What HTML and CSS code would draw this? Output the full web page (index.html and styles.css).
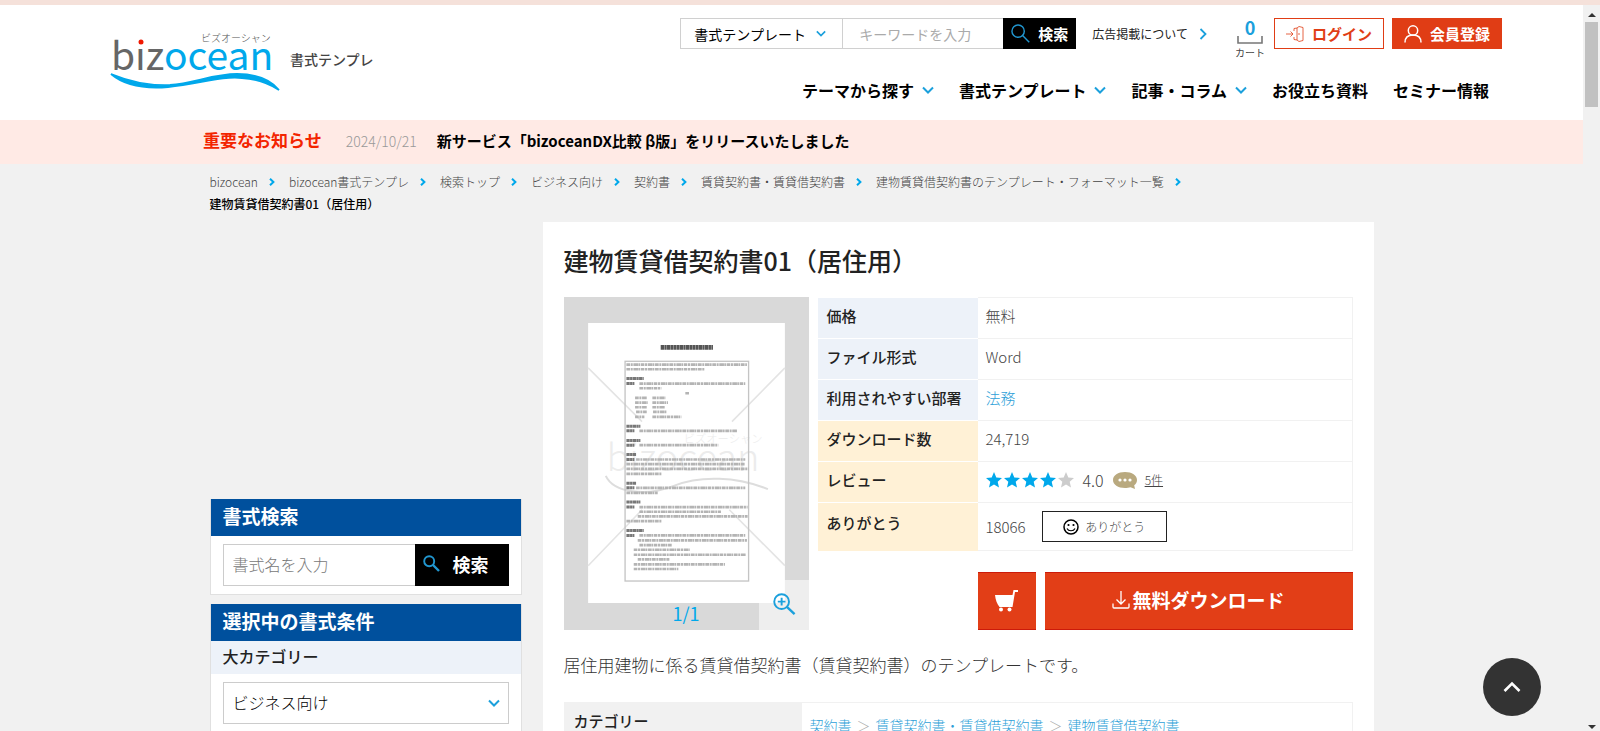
FILE: index.html
```html
<!DOCTYPE html>
<html lang="ja">
<head>
<meta charset="utf-8">
<meta name="viewport" content="width=device-width, initial-scale=1">
<title>建物賃貸借契約書01（居住用） | bizocean</title>
<link rel="stylesheet" href="styles.css">
</head>
<body>
<svg class="defs" width="0" height="0" aria-hidden="true">
  <symbol id="down" viewBox="0 0 12 8"><path d="M1 1.5l5 5 5-5" fill="none" stroke="currentColor" stroke-width="2"/></symbol>
  <symbol id="right" viewBox="0 0 8 12"><path d="M1.5 1l5 5-5 5" fill="none" stroke="currentColor" stroke-width="1.8"/></symbol>
  <symbol id="crumb" viewBox="0 0 6 8"><path d="M1 .8L4.4 4 1 7.2" fill="none" stroke="currentColor" stroke-width="2"/></symbol>
  <symbol id="lens" viewBox="0 0 20 20"><circle cx="7.5" cy="7.5" r="6.5" fill="none" stroke="currentColor" stroke-width="1.5"/><path d="M12.2 12.2l7 7" fill="none" stroke="currentColor" stroke-width="1.5"/></symbol>
  <symbol id="lens-bold" viewBox="0 0 17 17"><circle cx="6.2" cy="6.2" r="5" fill="none" stroke="currentColor" stroke-width="1.9"/><path d="M10 10l6 6" fill="none" stroke="currentColor" stroke-width="2.4"/></symbol>
  <symbol id="star" viewBox="0 0 16 16"><path d="M8 0l2.300 5.400 5.700.5-4.300 3.800 1.300 5.800L8 12.400l-5 3.100 1.300-5.800L0 5.900l5.700-.5z" fill="currentColor"/></symbol>
</svg>
<div class="strip"></div>
<div class="frame">
  <div class="page">
    <header class="header">
      <a class="brand" href="#">
        <svg class="logo" viewBox="0 0 170 62" role="img" aria-label="bizocean">
          <text x="91" y="10" class="logo-kana">ビズオーシャン</text>
          <text x="1" y="38" class="logo-word"><tspan fill="#666">biz</tspan><tspan fill="#00a8eb">ocean</tspan></text>
          <circle cx="31" cy="10" r="4" fill="#fff"/>
          <circle cx="31" cy="10" r="2.500" fill="#f01800"/>
          <path d="M1 42C14 53 34 57 58 55C92 51 112 44 132 46C147 47 158 51 169 58C160 47 145 42 127 42C104 42 84 51 60 53C36 54 18 49 1 42Z" fill="#00a8eb" stroke="#00a8eb" stroke-width="1.800"/>
        </svg>
        <span class="brand-sub">書式テンプレ</span>
      </a>
      <div class="head-right">
        <div class="tools">
          <form class="head-search">
            <label class="pick pick-small">
              <select aria-label="検索対象"><option>書式テンプレート</option></select>
              <svg class="i-down-s"><use href="#down"/></svg>
            </label>
            <input type="text" placeholder="キーワードを入力" aria-label="キーワード">
            <button type="button"><svg class="i-lens"><use href="#lens"/></svg>検索</button>
          </form>
          <a class="ad-link" href="#">広告掲載について<svg class="i-right"><use href="#right"/></svg></a>
          <a class="cart" href="#"><b>0</b><svg viewBox="0 0 26 8"><path d="M1 0v7h24V0" fill="none" stroke="#777" stroke-width="1.600"/></svg><span>カート</span></a>
          <a class="btn login" href="#"><svg viewBox="0 0 18 16"><path d="M8 5V2.500L11 2v12l-3-.5V11M11 2l2-1.500 4 1v13l-4 1L11 14M0 8h7M4.500 5.500L7 8l-2.500 2.500M13 7v2" fill="none" stroke="currentColor" stroke-width=".8"/></svg>ログイン</a>
          <a class="btn join" href="#"><svg viewBox="0 0 18 18"><circle cx="9" cy="5.500" r="4.700" fill="none" stroke="currentColor" stroke-width="1.500"/><path d="M1 17.500c0-5 3-7.500 8-7.500s8 2.500 8 7.500" fill="none" stroke="currentColor" stroke-width="1.500"/></svg>会員登録</a>
        </div>
        <nav class="nav">
          <a href="#">テーマから探す<svg class="i-down"><use href="#down"/></svg></a>
          <a href="#">書式テンプレート<svg class="i-down"><use href="#down"/></svg></a>
          <a href="#">記事・コラム<svg class="i-down"><use href="#down"/></svg></a>
          <a href="#">お役立ち資料</a>
          <a href="#">セミナー情報</a>
        </nav>
      </div>
    </header>

    <div class="notice">
      <strong>重要なお知らせ</strong>
      <time>2024/10/21</time>
      <a href="#">新サービス「bizoceanDX比較 β版」をリリースいたしました</a>
    </div>

    <div class="wrap">
      <ol class="crumbs">
        <li><a href="#">bizocean</a><svg><use href="#crumb"/></svg></li>
        <li><a href="#">bizocean書式テンプレ</a><svg><use href="#crumb"/></svg></li>
        <li><a href="#">検索トップ</a><svg><use href="#crumb"/></svg></li>
        <li><a href="#">ビジネス向け</a><svg><use href="#crumb"/></svg></li>
        <li><a href="#">契約書</a><svg><use href="#crumb"/></svg></li>
        <li><a href="#">賃貸契約書・賃貸借契約書</a><svg><use href="#crumb"/></svg></li>
        <li><a href="#">建物賃貸借契約書のテンプレート・フォーマット一覧</a><svg><use href="#crumb"/></svg></li>
        <li class="current">建物賃貸借契約書01（居住用）</li>
      </ol>

      <div class="columns">
        <aside class="side">
          <section class="panel">
            <h2>書式検索</h2>
            <form class="side-search">
              <input type="text" placeholder="書式名を入力" aria-label="書式名">
              <button type="button"><svg><use href="#lens-bold"/></svg>検索</button>
            </form>
          </section>
          <section class="panel">
            <h2>選択中の書式条件</h2>
            <h3><label for="big">大カテゴリー</label></h3>
            <div class="panel-body">
              <div class="pick pick-large">
                <select id="big"><option>ビジネス向け</option></select>
                <svg class="i-down"><use href="#down"/></svg>
              </div>
            </div>
          </section>
        </aside>

        <main class="main">
          <h1>建物賃貸借契約書01（居住用）</h1>
          <div class="product">
            <figure class="preview">
              <svg class="paper" viewBox="113 129 591 841" aria-hidden="true">
                <rect x="113" y="129" width="591" height="841" fill="#fff"/>
                <g stroke="#e4e4e4" stroke-width="5"><path d="M113 264L275 425M704 264L545 425M113 858L275 690M704 858L537 690"/></g>
                <text x="168" y="575" class="mark">bizocean</text>
                <text x="400" y="490" class="mark-kana">ビズオーシャン</text>
                <path d="M166 588C190 640 290 650 370 618S560 590 653 628" fill="none" stroke="#ddd" stroke-width="6"/>
                <rect x="224" y="244" width="371" height="660" fill="none" stroke="#c4c4c4" stroke-width="4"/>
                <g class="ink">
                  <path class="dark wide" d="M331 202H488"/>
                  <path class="dark" d="M228 296H280M228 311H252M228 439H270M228 453H252M228 482H270M228 496H252M228 524H258M228 539H252M228 610H258M228 624H252M228 667H270M228 682H252M228 752H280M228 767H252"/>
                  <path class="grey" d="M228 254H590M228 268H463M267 311H585M267 325H333M405 340H416M254 354H289M306 354H345M254 368H292M306 368H353M254 382H289M306 382H344M257 396H289M308 396H348M254 411H282M306 411H393M267 453H560M267 496H504M257 539H585M228 553H585M228 567H595M228 582H333M257 624H585M228 639H322M267 682H592M267 696H512M262 710H592M228 724H333M267 767H585M262 782H590M267 796H365M250 810H418M250 825H586M262 839H357M250 854H524M250 868H384"/>
                </g>
              </svg>
              <figcaption>1/1</figcaption>
              <button class="zoom" type="button" aria-label="拡大"><svg viewBox="0 0 24 24"><circle cx="9" cy="9" r="7.700" fill="none" stroke="currentColor" stroke-width="2"/><path d="M9 5v8M5 9h8" stroke="currentColor" stroke-width="2"/><path d="M14.500 14.500l8 7.500" stroke="currentColor" stroke-width="2.500"/></svg></button>
            </figure>
            <div class="details">
              <table class="info">
                <tr><th scope="row">価格</th><td>無料</td></tr>
                <tr><th scope="row">ファイル形式</th><td>Word</td></tr>
                <tr><th scope="row">利用されやすい部署</th><td><a href="#">法務</a></td></tr>
                <tr class="warm"><th scope="row">ダウンロード数</th><td>24,719</td></tr>
                <tr class="warm"><th scope="row">レビュー</th><td>
                  <div class="review">
                    <span class="stars"><svg><use href="#star"/></svg><svg><use href="#star"/></svg><svg><use href="#star"/></svg><svg><use href="#star"/></svg><svg class="off"><use href="#star"/></svg></span>
                    <span class="score">4.0</span>
                    <svg class="bubble" viewBox="0 0 24 17"><path d="M12 0c7 0 12 3.500 12 8 0 2-1 4-2.800 5.300L22 17l-4.500-1.800C16 15.700 14 16 12 16 5 16 0 12.500 0 8s5-8 12-8z" fill="#b9a97f"/><g fill="#fff"><circle cx="7" cy="8" r="1.600"/><circle cx="12" cy="8" r="1.600"/><circle cx="17" cy="8" r="1.600"/></g></svg>
                    <a href="#">5件</a>
                  </div></td></tr>
                <tr class="warm last"><th scope="row">ありがとう</th><td>
                  <div class="thanks"><span>18066</span>
                    <button type="button"><svg viewBox="0 0 16 16"><circle cx="8" cy="8" r="7" fill="none" stroke="#000" stroke-width="1.500"/><circle cx="5.500" cy="6" r="1.100"/><circle cx="10.500" cy="6" r="1.100"/><path d="M4 9.500c1.500 3 6.500 3 8 0" fill="none" stroke="#000" stroke-width="1.200"/></svg>ありがとう</button>
                  </div></td></tr>
              </table>
              <div class="actions">
                <button class="add" type="button" aria-label="カートに入れる"><svg viewBox="0 0 24 22"><path d="M0 5h17.500L18.500 0H23v2h-3l-2.500 15H4.500C2 14 .5 10 0 5z" fill="#fff"/><circle cx="6" cy="19.500" r="2" fill="#fff"/><circle cx="14.500" cy="19.500" r="2" fill="#fff"/></svg></button>
                <button class="download" type="button"><svg viewBox="0 0 18 18"><path d="M9 0v13M4.500 8.500L9 13l4.500-4.500M1 12.500v3.500q0 1 1 1h14q1 0 1-1v-3.500" fill="none" stroke="#fff" stroke-width="1.300"/></svg>無料ダウンロード</button>
              </div>
            </div>
          </div>
          <p class="lead">居住用建物に係る賃貸借契約書（賃貸契約書）のテンプレートです。</p>
          <table class="spec">
            <tr><th scope="row">カテゴリー</th><td><a href="#">契約書</a><span>＞</span><a href="#">賃貸契約書・賃貸借契約書</a><span>＞</span><a href="#">建物賃貸借契約書</a></td></tr>
          </table>
        </main>
      </div>
    </div>
    <a class="to-top" href="#" aria-label="ページの先頭へ"><svg viewBox="0 0 18 12"><path d="M1.500 10L9 2.500l7.500 7.500" fill="none" stroke="#fff" stroke-width="2.600"/></svg></a>
  </div>
  <div class="scrollbar" aria-hidden="true">
    <svg viewBox="0 0 8 4"><path d="M4 0l4 4H0z" fill="#333"/></svg>
    <div class="thumb"></div>
    <svg class="end" viewBox="0 0 8 4"><path d="M0 0h8L4 4z" fill="#333"/></svg>
  </div>
</div>
</body>
</html>
```
FILE: styles.css
```css
* { box-sizing: border-box; }
body {
  margin: 0;
  height: 100vh;
  display: flex;
  flex-direction: column;
  overflow: hidden;
  background: #f1f1f1;
  color: #222;
  font: 300 15px/20px "Noto Sans CJK JP", sans-serif;
}
a { color: inherit; text-decoration: none; }
button, input, select { font: inherit; color: inherit; margin: 0; border-radius: 0; }
button { padding: 0; border: 0; }
svg { display: block; flex: none; }
.defs { position: absolute; }
h1, h2, h3, p, ol, figure { margin: 0; padding: 0; }
.strip { flex: none; height: 5px; background: #f5e1da; }
.frame { flex: 1; min-height: 0; display: flex; }
.page { flex: 1; min-width: 0; overflow: hidden; position: relative; }

.header {
  display: flex;
  justify-content: space-between;
  height: 115px;
  padding: 13px 81px 0 110px;
  background: #fff;
}
.brand { display: flex; gap: 10px; padding-top: 14px; }
.logo { width: 170px; height: 62px; overflow: visible; }
.logo-kana { font-size: 10px; fill: #555; }
.logo-word { font-size: 39px; font-weight: 400; }
.brand-sub { padding-top: 17px; font-size: 14px; font-weight: 500; color: #444; }
.head-right { display: flex; flex-direction: column; align-items: flex-end; }
.tools { display: flex; align-items: flex-start; }
.head-search { display: flex; width: 396px; height: 31px; font-size: 14px; font-weight: 400; }
.pick { position: relative; display: block; }
.pick select { width: 100%; height: 100%; appearance: none; border: 1px solid #ccc; background: #fff; color: #000; outline: 0; }
.pick svg { position: absolute; top: 50%; margin-top: -4px; color: #1ba0dc; pointer-events: none; }
.pick-small { width: 163px; }
.pick-small select { padding: 0 13px; border-color: #d0d0d0; }
.pick-small svg { right: 17px; }
.head-search input { flex: 1; min-width: 0; padding: 0 16px; border: 1px solid #d0d0d0; border-width: 1px 0; background: #fff; }
input::placeholder { color: #aaa; opacity: 1; }
.head-search button {
  display: flex;
  align-items: center;
  gap: 8px;
  width: 73px;
  padding-left: 8px;
  background: #000;
  color: #fff;
  font-size: 15px;
  font-weight: 700;
}
.i-lens { width: 19px; height: 19px; color: #2196cf; }
.i-down { width: 12px; height: 8px; color: #1ba0dc; }
.i-down-s { width: 10px; height: 7px; }
.i-right { width: 8px; height: 12px; color: #1ba0dc; }
.ad-link { display: flex; align-items: center; gap: 11px; margin: 6px 28px 0 16px; font-size: 12px; font-weight: 400; }
.cart { display: flex; flex-direction: column; align-items: center; width: 30px; margin-right: 9px; color: #444; }
.cart b { font-size: 18px; line-height: 18px; color: #1ba0dc; font-weight: 700; }
.cart svg { width: 26px; height: 8px; }
.cart span { font-size: 10px; line-height: 18px; font-weight: 400; }
.btn {
  display: flex;
  align-items: center;
  justify-content: center;
  gap: 8px;
  width: 110px;
  height: 31px;
  border: 1px solid #e03d15;
  color: #e03d15;
  font-weight: 700;
}
.login { margin-right: 8px; }
.login svg { width: 18px; height: 16px; }
.join { background: #e03d15; color: #fff; }
.join svg { width: 18px; height: 18px; }
.nav { display: flex; gap: 25px; margin-top: 18px; padding-right: 13px; color: #000; font-size: 16px; font-weight: 700; }
.nav a { display: flex; align-items: center; gap: 8px; }

.notice {
  display: flex;
  align-items: center;
  height: 44px;
  padding: 0 203px 2px;
  background: #ffeae5;
  color: #000;
  font-weight: 700;
  white-space: nowrap;
}
.notice strong { color: #f32400; font-size: 17px; font-weight: 700; line-height: 26px; padding-bottom: 2px; }
.notice time { margin: 0 20px 0 24px; color: #999; font-size: 14px; font-weight: 300; }

.wrap { max-width: 1164px; margin: 0 auto; }
.crumbs { display: flex; flex-wrap: wrap; padding: 7px 0; list-style: none; font-size: 12px; line-height: 22px; color: #444; white-space: nowrap; }
.crumbs li { display: flex; align-items: center; }
.crumbs svg { width: 6px; height: 8px; margin: 0 14px 0 11px; color: #00a8eb; }
.crumbs .current { width: 100%; color: #000; font-weight: 500; }
.columns { display: flex; gap: 21px; align-items: flex-start; }
.side { width: 312px; flex: none; display: grid; gap: 9px; padding-top: 277px; }
.panel { border: 1px solid #e0e0e0; border-top: 0; background: #fff; }
.panel h2 { padding: 4px 12px 7px; background: #00509d; color: #fff; font-size: 19px; line-height: 26px; font-weight: 700; }
.panel h3 { padding: 3px 12px 6px; background: #edf2f9; font-size: 16px; line-height: 24px; font-weight: 500; }
.side-search { display: flex; padding: 8px 12px; height: 58px; font-size: 16px; }
.side-search input { flex: 1; min-width: 0; padding: 0 9px 2px; border: 1px solid #ccc; border-right: 0; background: #fff; }
.side-search input::placeholder { color: #777; }
.side-search button {
  display: flex;
  align-items: center;
  gap: 13px;
  width: 94px;
  padding: 0 0 3px 8px;
  background: #000;
  color: #fff;
  font-size: 18px;
  font-weight: 700;
}
.side-search svg { width: 17px; height: 17px; color: #2196cf; }
.panel-body { padding: 8px 12px; }
.pick-large { height: 42px; font-size: 16px; }
.pick-large select { padding: 0 9px 3px; }
.pick-large svg { right: 9px; }

.main { flex: 1; min-width: 0; padding: 18px 21px; background: #fff; }
.main h1 { font-size: 25px; line-height: 40px; font-weight: 500; }
.product { display: flex; gap: 9px; margin-top: 17px; }
.preview { position: relative; width: 245px; height: 333px; flex: none; padding: 26px 24px 0; background: #d9d9d9; }
.paper { width: 197px; height: 280px; overflow: visible; }
.mark { font-size: 114px; font-weight: 300; fill: #ececec; }
.mark-kana { font-size: 34px; fill: #ececec; }
.ink { fill: none; filter: blur(2px); }
.dark { stroke: #777; stroke-width: 9; stroke-dasharray: 10 1 7 1; }
.dark.wide { stroke: #555; stroke-width: 14; }
.grey { stroke: #b4b4b4; stroke-width: 8; stroke-dasharray: 11 2 6 2 14 1 5 2; }
.preview figcaption { text-align: center; color: #00a8eb; font-size: 18px; line-height: 20px; font-weight: 400; }
.zoom { position: absolute; right: 0; bottom: 0; width: 50px; height: 50px; padding: 12px 14px 14px; background: rgba(255, 255, 255, .55); color: #1ba0dc; }
.zoom svg { width: 23px; height: 23px; }
.details { flex: 1; min-width: 0; display: flex; flex-direction: column; justify-content: space-between; }
table { width: 100%; border-collapse: collapse; text-align: left; }
.info th, .info td { height: 41px; padding: 0 9px 4px; border-top: 1px solid #f1f1f1; font-weight: 300; vertical-align: middle; }
.info th { width: 160px; border-color: #fff; background: #edf2f9; color: #222; font-size: 15px; font-weight: 500; white-space: nowrap; }
.info td { padding-left: 8px; border-right: 1px solid #f1f1f1; color: #444; font-size: 15px; }
.info tr:last-child td { border-bottom: 1px solid #f1f1f1; }
.info .warm th { background: #fff1d6; }
.info .last th, .info .last td { height: 48px; }
.info .last th { padding-bottom: 8px; }
.info td a { color: #2e9fd8; }
.review { display: flex; align-items: center; }
.stars { display: flex; gap: 2px; color: #00a8eb; }
.stars svg { width: 16px; height: 16px; }
.stars .off { color: #ccc; }
.score { margin: 0 9px; font-size: 16px; }
.bubble { width: 24px; height: 17px; margin-right: 8px; }
.info .review a { color: #444; font-size: 12px; text-decoration: underline; }
.info .last td { padding-bottom: 0; }
.thanks { display: flex; align-items: center; gap: 16px; }
.thanks button { display: flex; align-items: center; justify-content: center; gap: 6px; width: 125px; height: 31px; border: 1px solid #222; background: #fff; font-size: 12px; }
.thanks button svg { width: 16px; height: 16px; }
.actions { display: flex; justify-content: flex-end; gap: 9px; height: 58px; padding-left: 160px; }
.add, .download { display: flex; align-items: center; justify-content: center; background: #e23e17; border: solid #cc1a0a; border-width: 1px 0; color: #fff; }
.add { width: 58px; flex: none; }
.add svg { width: 24px; height: 22px; }
.download { flex: 1; gap: 2px; padding-bottom: 2px; font-size: 19px; font-weight: 700; }
.download svg { width: 18px; height: 18px; }
.lead { margin: 23px 0 25px; font-size: 17px; line-height: 24px; color: #333; }
.spec th, .spec td { height: 44px; vertical-align: top; border: 1px solid #f1f1f1; }
.spec th { width: 237px; padding: 8px 9px; background: #f1f1f1; font-weight: 500; font-size: 15px; }
.spec td { padding: 12px 8px; color: #aaa; font-size: 14px; }
.spec span { margin: 0 5px; }
.spec a { color: #2e9fd8; }
.to-top { position: absolute; right: 42px; bottom: 15px; display: flex; align-items: center; justify-content: center; width: 58px; height: 58px; border-radius: 50%; background: #333; }
.to-top svg { width: 18px; height: 12px; }
.scrollbar { flex: none; width: 17px; display: flex; flex-direction: column; align-items: center; padding: 8px 0 2px; background: #f1f1f1; }
.scrollbar svg { width: 8px; height: 4px; }
.thumb { width: 13px; height: 85px; margin-top: 5px; background: #c1c1c1; }
.scrollbar .end { margin-top: auto; }
```
